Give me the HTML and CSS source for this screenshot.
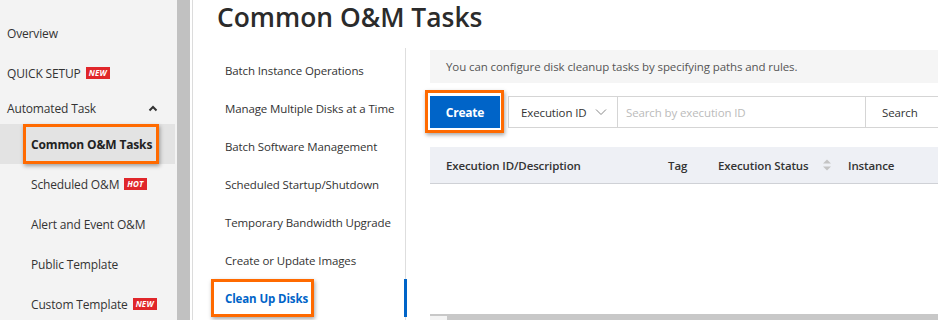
FILE: index.html
```html
<!DOCTYPE html>
<html>
<head>
<meta charset="utf-8">
<link rel="stylesheet" href="styles.css">
</head>
<body>
<div class="app">
  <nav class="sidebar">
    <div class="item top">Overview</div>
    <div class="item top quick">QUICK SETUP <span class="badge">NEW</span></div>
    <div class="item top group">Automated Task
      <svg class="chev" width="10" height="7" viewBox="0 0 10 7"><polyline points="1.5,5.5 5,2 8.5,5.5" fill="none" stroke="#333" stroke-width="2"/></svg>
    </div>
    <div class="item sub active"><span class="mark mark-side">Common O&amp;M Tasks</span></div>
    <div class="item sub">Scheduled O&amp;M <span class="badge">HOT</span></div>
    <div class="item sub">Alert and Event O&amp;M</div>
    <div class="item sub">Public Template</div>
    <div class="item sub">Custom Template <span class="badge">NEW</span></div>
  </nav>
  <div class="vscroll"></div>
  <main class="main">
    <h1 class="title">Common O&amp;M Tasks</h1>
    <div class="body">
      <ul class="subnav">
        <li>Batch Instance Operations</li>
        <li>Manage Multiple Disks at a Time</li>
        <li>Batch Software Management</li>
        <li>Scheduled Startup/Shutdown</li>
        <li>Temporary Bandwidth Upgrade</li>
        <li>Create or Update Images</li>
        <li class="current"><span class="mark mark-clean">Clean Up Disks</span></li>
      </ul>
      <section class="content">
        <div class="info">You can configure disk cleanup tasks by specifying paths and rules.</div>
        <div class="toolbar">
          <span class="mark mark-create"><button class="btn-primary">Create</button></span>
          <div class="search">
            <div class="select">Execution ID
              <svg width="12" height="8" viewBox="0 0 12 8"><polyline points="1,1.5 6,6.5 11,1.5" fill="none" stroke="#888" stroke-width="1"/></svg>
            </div>
            <div class="input">Search by execution ID</div>
            <div class="btn-search">Search</div>
          </div>
        </div>
        <div class="table">
          <div class="thead">
            <div class="th c1">Execution ID/Description</div>
            <div class="th c2">Tag</div>
            <div class="th c3">Execution Status
              <svg class="sort" width="8" height="12" viewBox="0 0 8 12"><polygon points="4,0.5 8,4.5 0,4.5" fill="#c4c4c4"/><polygon points="4,11.5 8,7.5 0,7.5" fill="#c4c4c4"/></svg>
            </div>
            <div class="th c4">Instance</div>
          </div>
          <div class="tbody"></div>
          <div class="hscroll"><div class="thumb"></div></div>
        </div>
      </section>
    </div>
  </main>
</div>
</body>
</html>
```

FILE: styles.css
```css
* { box-sizing: border-box; }
html, body { margin: 0; padding: 0; }
body {
  width: 938px;
  height: 320px;
  overflow: hidden;
  background: #fff;
  font-family: "Open Sans", "Noto Sans", sans-serif;
  font-size: 11.5px;
  letter-spacing: -0.12px;
  color: #333;
}
.app { display: flex; height: 320px; overflow: hidden; }

.sidebar {
  width: 177px;
  flex: none;
  background: #f3f3f3;
  padding-top: 13px;
  font-size: 12px;
  letter-spacing: -0.15px;
}
.item {
  display: flex;
  align-items: center;
  height: 40px;
  white-space: nowrap;
}
.item.top { padding-left: 7px; }
.item.group { height: 31px; justify-content: space-between; padding-right: 19px; }
.item.sub { padding-left: 31px; }
.item.active { background: #e3e3e3; width: 175px; font-weight: 700; color: #222; }
.chev { display: block; }

.badge {
  display: inline-block;
  margin-left: 5px;
  background: #e0262a;
  color: #fff;
  font-size: 8px;
  font-weight: 700;
  font-style: italic;
  line-height: 12px;
  height: 12px;
  padding: 0 3px;
  letter-spacing: 0.2px;
}

.vscroll {
  width: 15px;
  flex: none;
  background: #fff;
  border-left: 13px solid #c1c1c1;
}

.main {
  flex: 1;
  border-left: 1px solid #dcdcdc;
  padding-left: 24px;
  display: flex;
  flex-direction: column;
  min-width: 0;
  overflow: hidden;
}
.title {
  flex: none;
  margin: 0;
  height: 48px;
  line-height: 35px;
  font-size: 26.4px;
  letter-spacing: 0;
  font-weight: 600;
  color: #2b2b2b;
}
.body { display: flex; flex: none; }

.subnav {
  list-style: none;
  margin: 0;
  padding: 3px 0 0 0;
  width: 189px;
  flex: none;
  border-right: 1px solid #dedede;
}
.subnav li {
  height: 38px;
  display: flex;
  align-items: center;
  padding-left: 8px;
  white-space: nowrap;
  position: relative;
}
.subnav li.current { color: #0064c8; font-weight: 700; }
.subnav li.current::after {
  content: "";
  position: absolute;
  right: -2px;
  top: 0;
  bottom: 0;
  width: 3px;
  background: #0064c8;
}

.mark { position: relative; display: inline-block; }
.mark::after {
  content: "";
  position: absolute;
  border: 3px solid #ff6a00;
  box-shadow: 1px 2px 4px rgba(0,0,0,0.35);
  pointer-events: none;
}
.mark-side::after { left: -8px; right: -7px; top: -12px; bottom: -11px; }
.mark-clean::after { left: -14px; right: -6px; top: -12px; bottom: -11px; }
.mark-create { display: block; }
.mark-create::after { left: -5px; right: -4px; top: -6px; bottom: -5px; }

.content {
  flex: 1;
  margin-left: 24px;
  padding-top: 2px;
  display: flex;
  flex-direction: column;
  min-width: 0;
}
.info {
  height: 33px;
  background: #f5f5f5;
  color: #555;
  display: flex;
  align-items: center;
  padding-left: 16px;
  white-space: nowrap;
  letter-spacing: -0.09px;
}
.toolbar {
  margin-top: 13px;
  display: flex;
  align-items: center;
  height: 32px;
}
.btn-primary {
  display: block;
  width: 70px;
  height: 32px;
  border: none;
  background: #0064c8;
  color: #fff;
  font-family: inherit;
  font-size: 12px;
  font-weight: 700;
  letter-spacing: -0.2px;
  padding: 0;
}
.search {
  margin-left: 8px;
  flex: 1;
  display: flex;
  height: 32px;
  border: 1px solid #d5d5d5;
  border-right: none;
}
.select {
  width: 109px;
  display: flex;
  align-items: center;
  justify-content: space-between;
  padding: 0 10px 0 12px;
  border-right: 1px solid #d5d5d5;
  color: #333;
  white-space: nowrap;
}
.input {
  flex: 1;
  display: flex;
  align-items: center;
  padding-left: 8px;
  color: #bbb;
  white-space: nowrap;
}
.btn-search {
  width: 73px;
  border-left: 1px solid #d5d5d5;
  display: flex;
  align-items: center;
  padding-left: 16px;
  color: #333;
}

.table {
  margin-top: 19px;
  display: flex;
  flex-direction: column;
}
.thead {
  height: 37px;
  background: #eef0f5;
  border-bottom: 1px solid #cfd1d6;
  display: flex;
  align-items: center;
  font-weight: 600;
  color: #333;
  white-space: nowrap;
}
.th { display: flex; align-items: center; }
.c1 { width: 238px; padding-left: 16px; }
.c2 { width: 50px; }
.c3 { width: 130px; }
.c4 { flex: 1; }
.sort { margin-left: 14px; }
.tbody { height: 130px; }
.hscroll {
  height: 10px;
  border-top: 2px solid #c8c8c8;
  padding-left: 17px;
  background: #f4f4f4;
}
.thumb { height: 100%; background: #c8c8c8; }
```
